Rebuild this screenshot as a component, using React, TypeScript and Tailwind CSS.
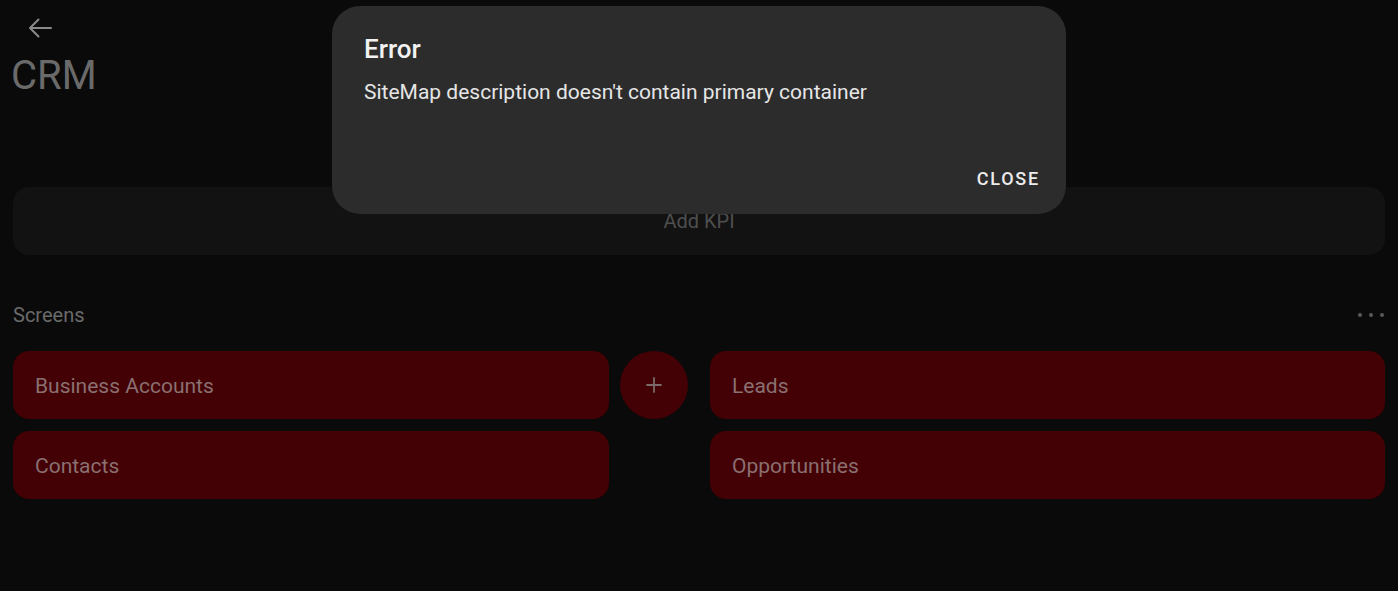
import { Plus } from "lucide-react";

const screens = [
	["Business Accounts", "Leads"],
	["Contacts", "Opportunities"],
];

function ScreenCard({ label }: { label: string }) {
	return (
		<div className="flex h-[68px] items-center rounded-[16px] bg-[#430005] px-[22px] pt-[3px] text-[21px] text-[#8a7070]">
			{label}
		</div>
	);
}

export default function App() {
	return (
		<div
			className="relative h-[591px] w-[1398px] overflow-hidden bg-[#0a0a0a]"
			style={{ fontFamily: "Roboto, 'Noto Sans', sans-serif" }}
		>
			{/* page under the dialog scrim */}
			<div className="flex flex-col px-[13px]">
				<button className="ml-[14px] mt-[16px] flex h-[24px] w-[28px] items-center text-[#8a8a8a]">
					<svg width="26" height="22" viewBox="0 0 26 22" fill="none">
						<path
							d="M24 11H3M11.5 2.5L3 11l8.5 8.5"
							stroke="currentColor"
							strokeWidth="2"
							strokeLinecap="round"
							strokeLinejoin="round"
						/>
					</svg>
				</button>
				<h1 className="-ml-[2px] mt-[13px] text-[40px] leading-[46px] text-[#6a6a6a]">CRM</h1>

				<div className="mt-[88px] flex h-[68px] items-center justify-center rounded-[16px] bg-[#121212] text-[20px] text-[#4e4e4e]">
					Add KPI
				</div>

				<div className="mt-[46px] flex items-center justify-between">
					<span className="text-[20px] leading-[28px] text-[#6a6a6a]">Screens</span>
					<span className="mr-[1px] flex gap-[7px]">
						<span className="h-[4px] w-[4px] rounded-full bg-[#5a5a5a]" />
						<span className="h-[4px] w-[4px] rounded-full bg-[#5a5a5a]" />
						<span className="h-[4px] w-[4px] rounded-full bg-[#5a5a5a]" />
					</span>
				</div>

				<div className="mt-[22px] flex flex-col gap-[12px]">
					{screens.map(([left, right], i) => (
						<div key={left} className="flex items-center">
							<div className="w-[596px]">
								<ScreenCard label={left} />
							</div>
							<div className="ml-[11px] mr-[22px] flex h-[68px] w-[68px] items-center justify-center">
								{i === 0 && (
									<div className="flex h-[68px] w-[68px] items-center justify-center rounded-full bg-[#430005] text-[#7a6a6a]">
										<Plus size={24} strokeWidth={1.8} />
									</div>
								)}
							</div>
							<div className="flex-1">
								<ScreenCard label={right} />
							</div>
						</div>
					))}
				</div>
			</div>

			{/* dialog */}
			<div className="absolute left-[332px] top-[6px] flex h-[208px] w-[734px] flex-col rounded-[28px] bg-[#2c2c2c] px-[32px]">
				<h2 className="mt-[28px] text-[26px] font-medium leading-[30px] text-[#f2f2f2]">Error</h2>
				<p className="mt-[15px] text-[21px] leading-[26px] text-[#e6e6e6]">
					SiteMap description doesn&apos;t contain primary container
				</p>
				<div className="mt-auto mb-[22px] flex justify-end">
					<button className="-mr-[6px] text-[18px] font-medium tracking-[1.8px] text-[#ececec]">CLOSE</button>
				</div>
			</div>
		</div>
	);
}
